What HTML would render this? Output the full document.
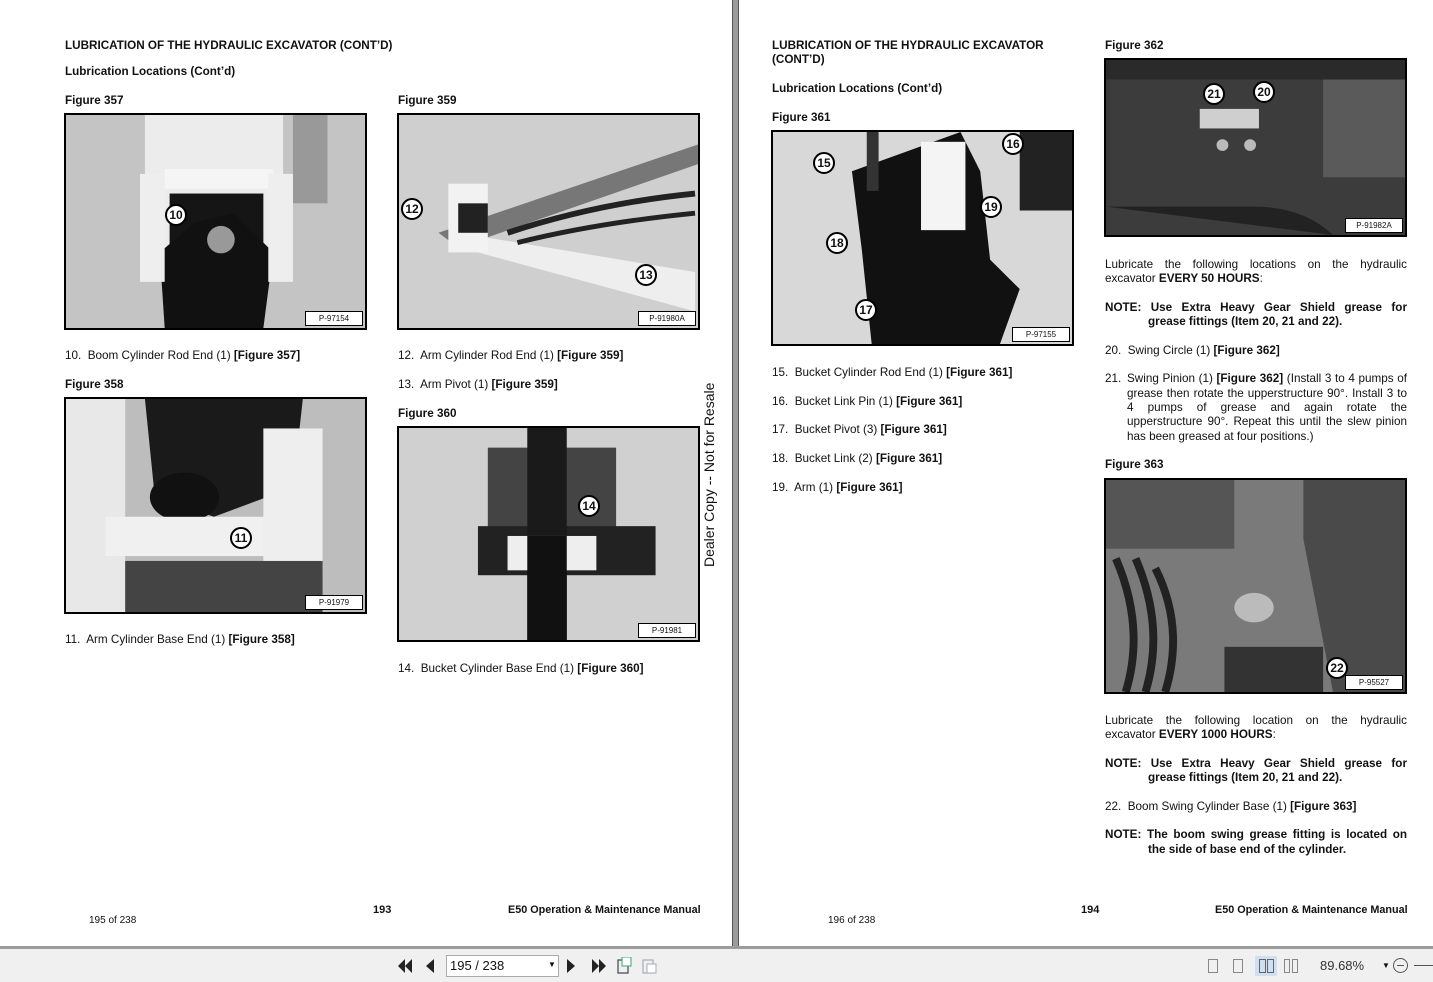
<!DOCTYPE html>
<html><head><meta charset="utf-8"><style>
*{margin:0;padding:0;box-sizing:border-box}
body{width:1433px;height:982px;background:#fff;position:relative;overflow:hidden;font-family:"Liberation Sans",Arial,sans-serif;color:#111}
.t{position:absolute;font-size:11.7px;line-height:14px;white-space:nowrap}
.b{font-weight:bold}
.j{text-align:justify;text-align-last:justify}
.fig{position:absolute;border:2px solid #000;overflow:hidden}
.fig svg{display:block;width:100%;height:100%}
.lab{position:absolute;right:2px;bottom:2px;background:#fff;border:1px solid #000;font-size:8px;padding:2px 6px;width:58px;text-align:center}
.c{position:absolute;width:22px;height:22px;border:2px solid #000;border-radius:50%;background:#fff;font:bold 12px "Liberation Sans",Arial,sans-serif;text-align:center;line-height:18px}
</style></head><body>
<div style="position:absolute;left:732px;top:0;width:7px;height:946px;background:#9c9c9c;border-left:1px solid #555;border-right:1px solid #555"></div>
<div style="position:absolute;left:0;top:946px;width:1433px;height:3px;background:#9c9c9c"></div>
<div style="position:absolute;left:0;top:949px;width:1433px;height:33px;background:#f0f0f0"></div>

<div class="t b" style="left:65px;top:39px">LUBRICATION OF THE HYDRAULIC EXCAVATOR (CONT’D)</div>
<div class="t b" style="left:65px;top:65px">Lubrication Locations (Cont’d)</div>
<div class="t b" style="left:65px;top:94px">Figure 357</div>
<div class="t b" style="left:398px;top:94px">Figure 359</div>

<div class="fig" style="left:64px;top:113px;width:303px;height:217px"><svg viewBox="0 0 303 217" preserveAspectRatio="none"><rect width="303" height="217" fill="#c4c4c4"/><rect x="80" y="0" width="140" height="140" fill="#ececec"/><rect x="230" y="0" width="35" height="90" fill="#999"/><rect x="100" y="55" width="110" height="20" fill="#f5f5f5"/><rect x="105" y="80" width="95" height="60" fill="#151515"/><polygon points="130,110 170,100 210,140 200,217 100,217 95,140" fill="#111"/><rect x="75" y="60" width="25" height="110" fill="#eee"/><rect x="205" y="60" width="25" height="110" fill="#eee"/><circle cx="157" cy="127" r="14" fill="#999"/></svg><div class="c" style="left:99px;top:89px">10</div><div class="lab">P-97154</div></div>

<div class="fig" style="left:397px;top:113px;width:303px;height:217px"><svg viewBox="0 0 303 217" preserveAspectRatio="none"><rect width="303" height="217" fill="#cfcfcf"/><polygon points="40,120 303,30 303,50 60,135" fill="#777"/><polygon points="60,120 300,160 300,200 80,140" fill="#eee"/><rect x="50" y="70" width="40" height="70" fill="#f2f2f2"/><rect x="60" y="90" width="30" height="30" fill="#222"/><path d="M110 120 Q200 90 300 80" stroke="#222" stroke-width="6" fill="none"/><path d="M120 130 Q200 110 300 100" stroke="#222" stroke-width="5" fill="none"/></svg><div class="c" style="left:2px;top:83px">12</div><div class="c" style="left:236px;top:149px">13</div><div class="lab">P-91980A</div></div>

<div class="t" style="left:65px;top:349px">10.&nbsp; Boom Cylinder Rod End (1) <b>[Figure 357]</b></div>
<div class="t" style="left:398px;top:349px">12.&nbsp; Arm Cylinder Rod End (1) <b>[Figure 359]</b></div>
<div class="t b" style="left:65px;top:378px">Figure 358</div>
<div class="t" style="left:398px;top:378px">13.&nbsp; Arm Pivot (1) <b>[Figure 359]</b></div>
<div class="t b" style="left:398px;top:407px">Figure 360</div>

<div class="fig" style="left:64px;top:397px;width:303px;height:217px"><svg viewBox="0 0 303 217" preserveAspectRatio="none"><rect width="303" height="217" fill="#bdbdbd"/><rect x="0" y="0" width="60" height="217" fill="#e8e8e8"/><polygon points="80,0 240,0 230,90 150,120 90,100" fill="#1a1a1a"/><ellipse cx="120" cy="100" rx="35" ry="25" fill="#111"/><rect x="40" y="120" width="180" height="40" fill="#f0f0f0"/><rect x="200" y="30" width="60" height="150" fill="#eee"/><rect x="60" y="165" width="200" height="52" fill="#444"/></svg><div class="c" style="left:164px;top:128px">11</div><div class="lab">P-91979</div></div>

<div class="fig" style="left:397px;top:426px;width:303px;height:216px"><svg viewBox="0 0 303 216" preserveAspectRatio="none"><rect width="303" height="216" fill="#d0d0d0"/><rect x="90" y="20" width="130" height="120" fill="#444"/><rect x="80" y="100" width="180" height="50" fill="#222"/><rect x="130" y="0" width="40" height="216" fill="#1a1a1a"/><rect x="110" y="110" width="90" height="35" fill="#eee"/><rect x="130" y="110" width="40" height="106" fill="#111"/></svg><div class="c" style="left:179px;top:67px">14</div><div class="lab">P-91981</div></div>

<div class="t" style="left:65px;top:633px">11.&nbsp; Arm Cylinder Base End (1) <b>[Figure 358]</b></div>
<div class="t" style="left:398px;top:662px">14.&nbsp; Bucket Cylinder Base End (1) <b>[Figure 360]</b></div>

<div class="t" style="left:701px;top:567px;transform:rotate(-90deg);transform-origin:0 0;font-size:14px;line-height:16px">Dealer Copy -- Not for Resale</div>

<div class="t" style="left:89px;top:914px;font-size:10px">195 of 238</div>
<div class="t b" style="left:373px;top:903px;font-size:11px">193</div>
<div class="t b" style="left:508px;top:903px;font-size:10.8px">E50 Operation &amp; Maintenance Manual</div>

<div class="t b" style="left:772px;top:39px">LUBRICATION OF THE HYDRAULIC EXCAVATOR<br>(CONT’D)</div>
<div class="t b" style="left:772px;top:82px">Lubrication Locations (Cont’d)</div>
<div class="t b" style="left:772px;top:111px">Figure 361</div>
<div class="t b" style="left:1105px;top:39px">Figure 362</div>

<div class="fig" style="left:771px;top:130px;width:303px;height:216px"><svg viewBox="0 0 303 216" preserveAspectRatio="none"><rect width="303" height="216" fill="#d8d8d8"/><rect x="250" y="0" width="53" height="80" fill="#222"/><polygon points="80,40 190,0 210,40 220,130 250,160 230,216 100,216 90,120" fill="#111"/><rect x="150" y="10" width="45" height="90" fill="#f4f4f4"/><rect x="95" y="0" width="12" height="60" fill="#333"/></svg><div class="c" style="left:40px;top:20px">15</div><div class="c" style="left:229px;top:1px">16</div><div class="c" style="left:207px;top:64px">19</div><div class="c" style="left:53px;top:100px">18</div><div class="c" style="left:82px;top:167px">17</div><div class="lab">P-97155</div></div>

<div class="fig" style="left:1104px;top:58px;width:303px;height:179px"><svg viewBox="0 0 303 179" preserveAspectRatio="none"><rect width="303" height="179" fill="#3c3c3c"/><rect x="0" y="0" width="303" height="20" fill="#2a2a2a"/><rect x="220" y="20" width="83" height="100" fill="#5a5a5a"/><rect x="95" y="50" width="60" height="20" fill="#cfcfcf"/><path d="M0 150 L150 150 Q200 150 230 179" fill="#222"/><circle cx="118" cy="87" r="6" fill="#bbb"/><circle cx="146" cy="87" r="6" fill="#bbb"/></svg><div class="c" style="left:97px;top:23px">21</div><div class="c" style="left:147px;top:21px">20</div><div class="lab">P-91982A</div></div>

<div class="t j" style="left:1105px;top:258px;width:302px">Lubricate the following locations on the hydraulic</div>
<div class="t" style="left:1105px;top:272px">excavator <b>EVERY 50 HOURS</b>:</div>
<div class="t b j" style="left:1105px;top:301px;width:302px">NOTE: Use Extra Heavy Gear Shield grease for</div>
<div class="t b" style="left:1148px;top:315px">grease fittings (Item 20, 21 and 22).</div>
<div class="t" style="left:1105px;top:344px">20.&nbsp; Swing Circle (1) <b>[Figure 362]</b></div>
<div class="t" style="left:1105px;top:372px">21.</div>
<div class="t j" style="left:1127px;top:372px;width:280px">Swing Pinion (1) <b>[Figure 362]</b> (Install 3 to 4 pumps of</div>
<div class="t j" style="left:1127px;top:387px;width:280px">grease then rotate the upperstructure 90°. Install 3 to</div>
<div class="t j" style="left:1127px;top:401px;width:280px">4 pumps of grease and again rotate the</div>
<div class="t j" style="left:1127px;top:415px;width:280px">upperstructure 90°. Repeat this until the slew pinion</div>
<div class="t" style="left:1127px;top:430px">has been greased at four positions.)</div>
<div class="t b" style="left:1105px;top:458px">Figure 363</div>

<div class="fig" style="left:1104px;top:478px;width:303px;height:216px"><svg viewBox="0 0 303 216" preserveAspectRatio="none"><rect width="303" height="216" fill="#7a7a7a"/><polygon points="200,0 303,0 303,216 230,216 200,60" fill="#4a4a4a"/><rect x="0" y="0" width="130" height="70" fill="#555"/><path d="M10 80 Q40 150 20 216 M30 80 Q60 150 40 216 M50 90 Q80 150 60 216" stroke="#222" stroke-width="8" fill="none"/><ellipse cx="150" cy="130" rx="20" ry="15" fill="#bbb"/><rect x="120" y="170" width="100" height="46" fill="#333"/></svg><div class="c" style="left:220px;top:177px">22</div><div class="lab">P-95527</div></div>

<div class="t j" style="left:1105px;top:714px;width:302px">Lubricate the following location on the hydraulic</div>
<div class="t" style="left:1105px;top:728px">excavator <b>EVERY 1000 HOURS</b>:</div>
<div class="t b j" style="left:1105px;top:757px;width:302px">NOTE: Use Extra Heavy Gear Shield grease for</div>
<div class="t b" style="left:1148px;top:771px">grease fittings (Item 20, 21 and 22).</div>
<div class="t" style="left:1105px;top:800px">22.&nbsp; Boom Swing Cylinder Base (1) <b>[Figure 363]</b></div>
<div class="t b j" style="left:1105px;top:828px;width:302px">NOTE: The boom swing grease fitting is located on</div>
<div class="t b" style="left:1148px;top:843px">the side of base end of the cylinder.</div>

<div class="t" style="left:772px;top:366px">15.&nbsp; Bucket Cylinder Rod End (1) <b>[Figure 361]</b></div>
<div class="t" style="left:772px;top:395px">16.&nbsp; Bucket Link Pin (1) <b>[Figure 361]</b></div>
<div class="t" style="left:772px;top:423px">17.&nbsp; Bucket Pivot (3) <b>[Figure 361]</b></div>
<div class="t" style="left:772px;top:452px">18.&nbsp; Bucket Link (2) <b>[Figure 361]</b></div>
<div class="t" style="left:772px;top:481px">19.&nbsp; Arm (1) <b>[Figure 361]</b></div>

<div class="t" style="left:828px;top:914px;font-size:10px">196 of 238</div>
<div class="t b" style="left:1081px;top:903px;font-size:11px">194</div>
<div class="t b" style="left:1215px;top:903px;font-size:10.8px">E50 Operation &amp; Maintenance Manual</div>

<svg style="position:absolute;left:396px;top:957px" width="270" height="18" viewBox="0 0 270 18">
<polygon points="2,3 2,15 8,9" fill="none"/>
<polygon points="9,2 2,9 9,16" fill="#222"/><polygon points="16,2 9,9 16,16" fill="#222"/><rect x="2" y="2" width="0" height="0"/>
<polygon points="38,2 30,9 38,16" fill="#222"/>
<polygon points="171,2 179,9 171,16" fill="#222"/>
<polygon points="196,2 203,9 196,16" fill="#222"/><polygon points="203,2 210,9 203,16" fill="#222"/>
<rect x="222" y="3" width="10" height="13" fill="none" stroke="#445" stroke-width="1.2"/><rect x="226" y="0" width="9" height="9" fill="#fff" stroke="#3a6" stroke-width="1"/>
<rect x="247" y="3" width="10" height="13" fill="none" stroke="#aab" stroke-width="1.2"/><rect x="251" y="7" width="9" height="9" fill="#fff" stroke="#aab" stroke-width="1"/>
</svg>
<div style="position:absolute;left:446px;top:955px;width:113px;height:22px;border:1px solid #aaa;background:#fff"></div>
<div class="t" style="left:450px;top:958px;font-size:13px;line-height:16px">195 / 238</div>
<div class="t" style="left:548px;top:958px;font-size:8px">▼</div>
<div style="position:absolute;left:1208px;top:959px;width:10px;height:14px;border:1px solid #888"></div>
<div style="position:absolute;left:1233px;top:959px;width:10px;height:14px;border:1px solid #888"></div>
<div style="position:absolute;left:1255px;top:956px;width:22px;height:20px;background:#cfe0f3"></div>
<div style="position:absolute;left:1259px;top:959px;width:7px;height:14px;border:1px solid #666"></div>
<div style="position:absolute;left:1267px;top:959px;width:7px;height:14px;border:1px solid #666"></div>
<div style="position:absolute;left:1284px;top:959px;width:6px;height:14px;border:1px solid #888"></div>
<div style="position:absolute;left:1292px;top:959px;width:6px;height:14px;border:1px solid #888"></div>
<div class="t" style="left:1320px;top:958px;font-size:13px;line-height:16px;color:#333">89.68%</div>
<div class="t" style="left:1382px;top:959px;font-size:8px">▼</div>
<div style="position:absolute;left:1393px;top:958px;width:15px;height:15px;border:1px solid #555;border-radius:50%"></div>
<div style="position:absolute;left:1397px;top:965px;width:7px;height:1px;background:#555"></div>
<div style="position:absolute;left:1414px;top:965px;width:19px;height:1px;background:#555"></div>
</body></html>
